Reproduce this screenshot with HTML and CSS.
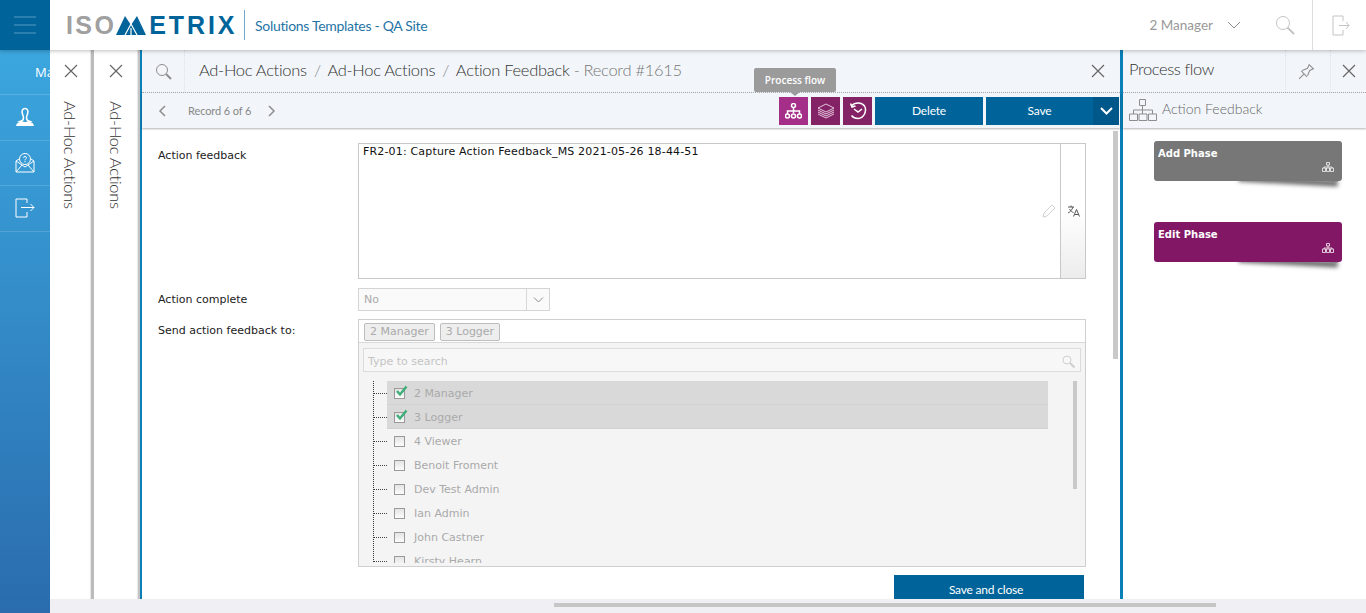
FILE: index.html
```html
<!DOCTYPE html>
<html lang="en">
<head>
    <meta charset="UTF-8">
    <meta name="viewport" content="width=device-width, initial-scale=1.0">
    <title>Action Feedback - Record #1615</title>
    <link rel="stylesheet" href="styles.css">
</head>
<body>
    <!-- Top Bar -->
    <header class="topbar">
        <div class="menu-btn">
            <span></span><span></span><span></span>
        </div>
        <div class="logo">
            <span class="logo-iso">ISO</span>
            <svg class="logo-m" width="30" height="19" viewBox="0 0 30 19">
                <path d="M0 19 L9 0 L15 9 L21 0 L30 19 Z" fill="#00649a"/>
                <path d="M9 19 L15 8 L21 19 M15 12 V19" fill="none" stroke="#fff" stroke-width="1.200"/>
            </svg>
            <span class="logo-etrix">ETRIX</span>
        </div>
        <div class="site-name">Solutions Templates - QA Site</div>
        <div class="user-box">
            <span class="user-name">2 Manager</span>
            <svg width="14" height="8" viewBox="0 0 14 8"><path d="M1 1 L7 7 L13 1" class="line-gray"/></svg>
            <svg class="top-search" width="20" height="20" viewBox="0 0 20 20"><circle cx="8" cy="8" r="6.500" class="line-light"/><path d="M12.500 12.500 L19 19" class="line-light thick"/></svg>
            <div class="top-logout">
                <svg width="18" height="21" viewBox="0 0 18 21"><path d="M11 6 V1 H1 V20 H11 V15 M7 10.500 H17 M14 7 L17 10.500 L14 14" class="line-light"/></svg>
            </div>
        </div>
    </header>

    <div class="workspace">
        <!-- Side Nav -->
        <nav class="sidenav">
            <div class="nav-item nav-first">Ma</div>
            <div class="nav-item">
                <svg width="20" height="20" viewBox="0 0 20 20"><path d="M10 1.500 C7.500 1.500 6.800 3.500 7.200 6 C7.600 8 8.500 9 8.500 11 C8.500 13 7 14 5 14.500 L10 16 L15 14.500 C13 14 11.500 13 11.500 11 C11.500 9 12.400 8 12.800 6 C13.200 3.500 12.500 1.500 10 1.500 Z" class="line-white wide"/><path d="M1 19 C1.500 16.500 3 15.300 6 14.500 L10 16 L14 14.500 C17 15.300 18.500 16.500 19 19 Z" fill="#fff"/></svg>
            </div>
            <div class="nav-item">
                <svg width="20" height="20" viewBox="0 0 20 20"><path d="M1 8 L4 6 M16 6 L19 8 V19 H1 V8 L10 14 L19 8 M1 19 L7 12 M19 19 L13 12" class="line-white"/><circle cx="10" cy="6" r="5.500" class="line-white"/><path d="M8.500 4.800 C8.500 3 11.500 3 11.500 4.800 C11.500 6 10 6 10 7.300 M10 8 V9.200" class="line-white"/></svg>
            </div>
            <div class="nav-item">
                <svg width="20" height="20" viewBox="0 0 20 20"><path d="M12 5 V1 H1 V19 H12 V14 M6 9.500 H19 M15.500 6 L19 9.500 L15.500 13" class="line-white"/></svg>
            </div>
        </nav>

        <div class="content-col">
            <div class="panels">
                <!-- Collapsed Panels -->
                <div class="collapsed-panel">
                    <svg class="close-icon" width="14" height="14" viewBox="0 0 14 14"><path d="M1 1 L13 13 M13 1 L1 13"/></svg>
                    <div class="collapsed-title">Ad-Hoc Actions</div>
                </div>
                <div class="collapsed-panel panel-two">
                    <svg class="close-icon" width="14" height="14" viewBox="0 0 14 14"><path d="M1 1 L13 13 M13 1 L1 13"/></svg>
                    <div class="collapsed-title">Ad-Hoc Actions</div>
                </div>

                <!-- Record Panel -->
                <main class="record-panel">
                    <div class="panel-title-row">
                        <div class="title-search">
                            <svg width="17" height="17" viewBox="0 0 17 17"><circle cx="7" cy="7" r="5.500" class="line-gray"/><path d="M11 11 L16 16" class="line-gray thick"/></svg>
                        </div>
                        <div class="crumbs">Ad-Hoc Actions <i>/</i> Ad-Hoc Actions <i>/</i> Action Feedback <span class="crumb-record">- Record #1615</span></div>
                        <svg class="close-icon title-close" width="14" height="14" viewBox="0 0 14 14"><path d="M1 1 L13 13 M13 1 L1 13"/></svg>
                    </div>

                    <div class="toolbar">
                        <svg width="8" height="12" viewBox="0 0 8 12"><path d="M7 1 L2 6 L7 11" class="line-gray wide"/></svg>
                        <span class="record-count">Record 6 of 6</span>
                        <svg width="8" height="12" viewBox="0 0 8 12"><path d="M1 1 L6 6 L1 11" class="line-gray wide"/></svg>

                        <div class="toolbar-actions">
                            <div class="tooltip">Process flow</div>
                            <button class="icon-btn active">
                                <svg width="17" height="16" viewBox="0 0 17 16"><circle cx="8.500" cy="2.500" r="2" class="line-white wide"/><path d="M8.500 4.500 V10 M2.500 11 V8 H14.500 V11" class="line-white wide"/><circle cx="2.500" cy="13" r="2" class="line-white wide"/><circle cx="8.500" cy="13" r="2" class="line-white wide"/><circle cx="14.500" cy="13" r="2" class="line-white wide"/></svg>
                            </button>
                            <button class="icon-btn">
                                <svg width="18" height="16" viewBox="0 0 18 16"><path d="M9 1 L17 5 L9 9 L1 5 Z M1 7 L9 11 L17 7 M1 9 L9 13 L17 9 M1 11 L9 15 L17 11" class="line-pink"/></svg>
                            </button>
                            <button class="icon-btn">
                                <svg width="18" height="18" viewBox="0 0 18 18"><path d="M3 3.500 C6 0 13 0 15.500 4 C18 8.500 15.500 16 9 16.500 C6 16.500 4 15.500 2.500 13.500 M1.500 1.500 L3 5 L6.500 4 M5 7 L9 10 L13 7" class="line-white wide"/></svg>
                            </button>
                            <button class="text-btn delete-btn">Delete</button>
                            <div class="save-btn">
                                <button class="text-btn">Save</button>
                                <div class="save-arrow">
                                    <svg width="13" height="8" viewBox="0 0 13 8"><path d="M1 1 L6.500 6.500 L12 1" class="line-white thick"/></svg>
                                </div>
                            </div>
                        </div>
                    </div>

                    <div class="form-area">
                        <div class="form-scroll"></div>
                        <div class="form-row">
                            <label class="form-label first-label">Action feedback</label>
                            <div class="feedback-box">
                                <div class="feedback-text">
                                    FR2-01: Capture Action Feedback_MS 2021-05-26 18-44-51
                                    <svg class="pencil" width="14" height="14" viewBox="0 0 14 14"><path d="M1 13 L2 9 L10 1 L13 4 L5 12 Z" class="line-pale"/></svg>
                                </div>
                                <div class="translate-col">
                                    <svg width="13" height="12" viewBox="0 0 13 12"><path d="M1 2 H7 M4 0.500 V2 M6 2 C5 5 3 7 1 8 M2.500 4 C3.500 6 5 7 6.500 7.500" class="line-dark"/><path d="M6.500 11.500 L9.500 4.500 L12.500 11.500 M7.500 9.500 H11.500" class="line-dark"/></svg>
                                </div>
                            </div>
                        </div>

                        <div class="form-row row-tight">
                            <label class="form-label">Action complete</label>
                            <div class="select-box">
                                <span class="select-value">No</span>
                                <div class="select-arrow">
                                    <svg width="11" height="6" viewBox="0 0 11 6"><path d="M1 0.500 L5.500 5 L10 0.500" class="line-gray"/></svg>
                                </div>
                            </div>
                        </div>

                        <div class="form-row row-tight">
                            <label class="form-label">Send action feedback to:</label>
                            <div class="picker">
                                <div class="chips">
                                    <span class="chip">2 Manager</span>
                                    <span class="chip">3 Logger</span>
                                </div>
                                <div class="picker-body">
                                    <div class="picker-search">
                                        <span>Type to search</span>
                                        <svg width="13" height="13" viewBox="0 0 13 13"><circle cx="5" cy="5" r="4" class="line-pale"/><path d="M8 8 L12.500 12.500" class="line-pale thick"/></svg>
                                    </div>
                                    <div class="tree">
                                        <div class="tree-thumb"></div>
                                        <div class="tree-row selected"><span class="check on"><svg width="14" height="13" viewBox="0 0 14 13"><path d="M3 6 L6 9.500 L12.500 1.500" class="tick"/></svg></span>2 Manager</div>
                                        <div class="tree-row selected"><span class="check on"><svg width="14" height="13" viewBox="0 0 14 13"><path d="M3 6 L6 9.500 L12.500 1.500" class="tick"/></svg></span>3 Logger</div>
                                        <div class="tree-row"><span class="check"></span>4 Viewer</div>
                                        <div class="tree-row"><span class="check"></span>Benoit Froment</div>
                                        <div class="tree-row"><span class="check"></span>Dev Test Admin</div>
                                        <div class="tree-row"><span class="check"></span>Ian Admin</div>
                                        <div class="tree-row"><span class="check"></span>John Castner</div>
                                        <div class="tree-row"><span class="check"></span>Kirsty Hearn</div>
                                    </div>
                                </div>
                            </div>
                        </div>

                        <div class="form-footer">
                            <button class="text-btn close-btn">Save and close</button>
                        </div>
                    </div>
                </main>

                <!-- Process Flow Panel -->
                <aside class="flow-panel">
                    <div class="flow-title-row">
                        <div class="flow-title">Process flow</div>
                        <div class="flow-pin">
                            <svg width="17" height="17" viewBox="0 0 16 16"><path d="M1 15 L5.500 10.500 M3 7.500 L8.500 13 M4 7 L9 5 L10.500 1.500 L14.500 5.500 L11 7 L9 12" class="line-gray"/></svg>
                        </div>
                        <div class="flow-close">
                            <svg class="close-icon" width="14" height="14" viewBox="0 0 14 14"><path d="M1 1 L13 13 M13 1 L1 13"/></svg>
                        </div>
                    </div>
                    <div class="flow-sub">
                        <svg width="28" height="22" viewBox="0 0 28 22"><path d="M10.500 0.500 H16.500 V6.500 H10.500 Z M13.500 6.500 V11 M4.500 15 V11 H23.500 V15 M13.500 11 V15 M0.500 15 H8.500 V21.500 H0.500 Z M10 15 H18 V21.500 H10 Z M19.500 15 H27.500 V21.500 H19.500 Z" class="line-gray"/></svg>
                        <span>Action Feedback</span>
                    </div>
                    <div class="phase-list">
                        <div class="phase phase-add">
                            Add Phase
                            <svg class="phase-icon" width="12" height="10" viewBox="0 0 12 10"><path d="M4.500 0.500 H7.500 V3 H4.500 Z M6 3 V5 M0.500 6 H3.500 V9.500 H0.500 Z M4.500 6 H7.500 V9.500 H4.500 Z M8.500 6 H11.500 V9.500 H8.500 Z M2 6 V5 H10 V6" class="line-phase"/></svg>
                        </div>
                        <div class="phase phase-edit">
                            Edit Phase
                            <svg class="phase-icon" width="12" height="10" viewBox="0 0 12 10"><path d="M4.500 0.500 H7.500 V3 H4.500 Z M6 3 V5 M0.500 6 H3.500 V9.500 H0.500 Z M4.500 6 H7.500 V9.500 H4.500 Z M8.500 6 H11.500 V9.500 H8.500 Z M2 6 V5 H10 V6" class="line-phase"/></svg>
                        </div>
                    </div>
                </aside>
            </div>

            <div class="page-scroll"><div class="page-thumb"></div></div>
        </div>
    </div>
</body>
</html>
```

FILE: styles.css
```css
/* General Styles */
* {
    box-sizing: border-box;
}

html, body {
    height: 100%;
}

body {
    display: flex;
    flex-direction: column;
    margin: 0;
    overflow: hidden;
    font-family: "DejaVu Sans", Verdana, sans-serif;
    font-size: 11px;
    color: #222;
    background-color: #fff;
}

button {
    border: none;
    padding: 0;
    font: inherit;
    cursor: pointer;
}

svg {
    display: block;
    flex: none;
}

/* SVG line colours */
.line-white, .line-gray, .line-light, .line-pale, .line-dark, .line-phase, .line-pink {
    fill: none;
    stroke-width: 1;
}

.line-white { stroke: #fff; }
.line-pink { stroke: #e6c6dd; }
.line-gray { stroke: #8d8d8d; }
.line-light { stroke: #c4c4c4; }
.line-pale { stroke: #d0d0d0; }
.line-dark { stroke: #555; }
.line-phase { stroke: rgba(255, 255, 255, 0.75); }
.wide { stroke-width: 1.500; }
.thick { stroke-width: 2; }

.close-icon path {
    fill: none;
    stroke: #666;
    stroke-width: 1.200;
}

/* Top Bar */
.topbar {
    position: relative;
    z-index: 5;
    display: flex;
    align-items: center;
    flex: none;
    height: 50px;
    background: #fff;
    box-shadow: 0 1px 4px rgba(0, 0, 0, 0.25);
}

.menu-btn {
    display: flex;
    flex-direction: column;
    justify-content: center;
    gap: 6px;
    width: 50px;
    height: 50px;
    padding: 0 14px;
    background: #00649a;
}

.menu-btn span {
    height: 2px;
    background: #2a7fae;
}

.logo {
    display: flex;
    align-items: center;
    width: 179px;
    height: 30px;
    margin-left: 16px;
    font-family: "Liberation Sans", Arial, sans-serif;
    font-size: 25px;
    font-weight: bold;
    border-right: 1px solid #6fa9c8;
}

.logo-iso {
    color: #a0a0a0;
    letter-spacing: 2.400px;
}

.logo-m {
    margin: 0 3px 0 0;
}

.logo-etrix {
    color: #00649a;
    letter-spacing: 2.900px;
}

.site-name {
    margin-left: 10px;
    font-family: Lato, sans-serif;
    font-size: 14px;
    letter-spacing: -0.300px;
    color: #1f74a5;
}

.user-box {
    display: flex;
    align-items: center;
    height: 50px;
    margin-left: auto;
}

.user-name {
    margin-right: 14px;
    font-family: Lato, sans-serif;
    font-size: 13.500px;
    color: #999;
}

.top-search {
    margin-left: 34px;
}

.top-logout {
    display: flex;
    align-items: center;
    height: 50px;
    margin-left: 17px;
    padding: 0 16px 0 19px;
    border-left: 1px solid #ddd;
}

/* Layout */
.workspace {
    display: flex;
    flex: 1;
    min-height: 0;
}

.sidenav {
    flex: none;
    width: 50px;
    overflow: hidden;
    background: linear-gradient(#3ba6de, #2a6cae);
}

.nav-item {
    display: flex;
    align-items: center;
    justify-content: center;
    height: 45.500px;
    border-bottom: 1px solid rgba(255, 255, 255, 0.15);
}

.nav-first {
    justify-content: flex-start;
    height: 45px;
    padding-left: 35px;
    font-family: "Open Sans", sans-serif;
    font-size: 13px;
    color: #fff;
    white-space: nowrap;
}

.content-col {
    display: flex;
    flex-direction: column;
    flex: 1;
    min-width: 0;
}

.panels {
    display: flex;
    flex: 1;
    min-height: 0;
}

.page-scroll {
    flex: none;
    height: 14px;
    padding: 4px 0 0 504px;
    background: #f0eff4;
}

.page-thumb {
    width: 662px;
    height: 4px;
    background: #c6c6c6;
}

/* Collapsed Panels */
.collapsed-panel {
    display: flex;
    flex-direction: column;
    align-items: center;
    flex: none;
    width: 44px;
    padding-top: 14px;
    background: #fff;
    border-right: 3px solid #bbb;
    box-shadow: inset -1px 0 1px rgba(0, 0, 0, 0.1);
}

.panel-two {
    width: 46px;
    border-right: 2px solid #c4c4c4;
}

.collapsed-title {
    margin-top: 23px;
    margin-left: -2px;
    writing-mode: vertical-rl;
    font-family: Lato, sans-serif;
    font-size: 16.500px;
    font-weight: 300;
    letter-spacing: -0.300px;
    color: #333;
    white-space: nowrap;
}

.panel-two .collapsed-title {
    margin-left: -1px;
}

/* Record Panel */
.record-panel {
    display: flex;
    flex-direction: column;
    flex: none;
    width: 983px;
    min-height: 0;
    border-left: 2px solid #0a7fb8;
    border-right: 3px solid #0a7fb8;
    background: #fff;
}

.panel-title-row {
    display: flex;
    align-items: center;
    flex: none;
    height: 43px;
    background: #f2f6fa;
    border-bottom: 1px dotted #aaa;
}

.title-search {
    display: flex;
    align-items: center;
    justify-content: center;
    width: 43px;
    height: 42px;
    border-right: 1px dotted #dde3ea;
}

.crumbs {
    margin-left: 14px;
    margin-top: -3px;
    font-family: Lato, sans-serif;
    font-size: 16.500px;
    font-weight: 300;
    letter-spacing: -0.300px;
    color: #333;
    white-space: nowrap;
}

.crumbs i {
    margin: 0 3px;
    font-style: normal;
    color: #888;
}

.crumb-record {
    color: #777;
}

.title-close {
    margin-left: auto;
    margin-right: 15px;
}

.toolbar {
    display: flex;
    align-items: center;
    flex: none;
    height: 35px;
    padding-left: 16px;
    background: #f2f6fa;
    box-shadow: 0 1px 2px rgba(0, 0, 0, 0.3);
    z-index: 2;
}

.record-count {
    width: 80px;
    margin-left: 22px;
    font-family: Lato, sans-serif;
    font-size: 11px;
    letter-spacing: -0.100px;
    color: #888;
}

.toolbar-actions {
    position: relative;
    display: flex;
    gap: 3px;
    margin-left: auto;
    margin-right: 1px;
}

.tooltip {
    position: absolute;
    top: -29px;
    left: -25px;
    width: 82px;
    height: 24px;
    border-radius: 2px;
    background: #9b9b9b;
    font-family: "Open Sans", sans-serif;
    font-size: 10px;
    font-weight: 600;
    line-height: 24px;
    text-align: center;
    color: #fff;
}

.tooltip::after {
    content: "";
    position: absolute;
    left: 36px;
    bottom: -4px;
    border-left: 5px solid transparent;
    border-right: 5px solid transparent;
    border-top: 4px solid #9b9b9b;
}

.icon-btn {
    display: flex;
    align-items: center;
    justify-content: center;
    width: 29px;
    height: 28px;
    background: #842266;
}

.icon-btn.active {
    background: #a52e89;
}

.text-btn {
    font-family: Lato, sans-serif;
    font-size: 12px;
    letter-spacing: -0.200px;
    color: #fff;
    background: #00649a;
}

.delete-btn {
    width: 108px;
    height: 28px;
}

.save-btn {
    display: flex;
    width: 133px;
    height: 28px;
}

.save-btn .text-btn {
    width: 107px;
}

.save-arrow {
    display: flex;
    align-items: center;
    justify-content: center;
    width: 26px;
    background: #00578a;
}

/* Form */
.form-area {
    position: relative;
    flex: 1;
    min-height: 0;
    overflow: hidden;
    padding-top: 15px;
    padding-left: 16px;
}

.form-scroll {
    position: absolute;
    top: 3px;
    right: 2px;
    width: 5px;
    height: 228px;
    background: #c9c9c9;
}

.form-row {
    display: flex;
    margin-bottom: 9px;
}

.row-tight {
    margin-bottom: 8px;
}

.form-label {
    flex: none;
    width: 200px;
    padding-top: 5px;
    color: #222;
}

.first-label {
    padding-top: 6px;
}

.feedback-box {
    display: flex;
    width: 728px;
    height: 136px;
    border: 1px solid #c8c8c8;
}

.feedback-text {
    position: relative;
    flex: 1;
    padding: 1px 4px;
    letter-spacing: 0.170px;
    color: #111;
}

.pencil {
    position: absolute;
    right: 4px;
    bottom: 60px;
}

.translate-col {
    display: flex;
    justify-content: center;
    flex: none;
    width: 25px;
    padding-top: 61px;
    border-left: 1px solid #c8c8c8;
    background: linear-gradient(#fff 50%, #ececec);
}

.select-box {
    display: flex;
    align-items: center;
    width: 192px;
    height: 23px;
    border: 1px solid #d4d4d4;
    background: #fafafa;
}

.select-value {
    flex: 1;
    padding-left: 5px;
    color: #aaa;
}

.select-arrow {
    display: flex;
    align-items: center;
    justify-content: center;
    width: 23px;
    height: 21px;
    border-left: 1px solid #d8d8d8;
}

.picker {
    width: 728px;
    height: 248px;
    border: 1px solid #cfcfcf;
    background: #f4f4f4;
}

.chips {
    display: flex;
    gap: 5px;
    height: 23px;
    padding: 3px 0 0 5px;
    background: #fff;
    border-bottom: 1px solid #d8d8d8;
}

.chip {
    height: 18px;
    padding: 0 5px;
    border: 1px solid #bdbdbd;
    border-radius: 2px;
    background: #eee;
    line-height: 16px;
    color: #aaa;
}

.picker-body {
    padding: 5px 4px 0;
}

.picker-search {
    display: flex;
    align-items: center;
    justify-content: space-between;
    height: 24px;
    padding: 2px 5px 0 4px;
    border: 1px solid #dcdcdc;
    background: #f7f7f7;
    color: #c4c4c4;
}

.tree {
    position: relative;
    height: 182px;
    margin-top: 9px;
    overflow: hidden;
    padding-left: 24px;
    padding-right: 33px;
    background-image: linear-gradient(#333 50%, transparent 50%);
    background-size: 1px 2px;
    background-repeat: repeat-y;
    background-position: 10px 0;
}

.tree-thumb {
    position: absolute;
    top: 0;
    right: 4px;
    width: 4px;
    height: 108px;
    background: #c9c9c9;
}

.tree-row {
    position: relative;
    display: flex;
    align-items: center;
    height: 24px;
    padding-left: 7px;
    color: #aaa;
}

.tree-row::before {
    content: "";
    position: absolute;
    left: -13px;
    top: 12px;
    width: 13px;
    border-top: 1px dotted #444;
}

.tree-row.selected {
    background: #d9d9d9;
    box-shadow: inset 0 -1px 0 #d2d2d2;
}

.check {
    position: relative;
    flex: none;
    width: 11px;
    height: 11px;
    margin-right: 9px;
    border: 1px solid #999;
    background: linear-gradient(#e4e4e4, #fbfbfb);
}

.check svg {
    position: absolute;
    top: -4px;
    left: -1px;
}

.tick {
    fill: none;
    stroke: #3fae78;
    stroke-width: 2.400;
}

.form-footer {
    display: flex;
    justify-content: flex-end;
    width: 926px;
}

.close-btn {
    width: 190px;
    height: 30px;
    padding: 0 6px 2px 0;
}

/* Process Flow Panel */
.flow-panel {
    flex: 1;
    min-width: 0;
    background: #fff;
}

.flow-title-row {
    display: flex;
    height: 43px;
    background: #f2f6fa;
    border-bottom: 1px dotted #aaa;
}

.flow-title {
    flex: 1;
    padding-left: 6px;
    font-family: Lato, sans-serif;
    font-size: 16.500px;
    font-weight: 300;
    letter-spacing: -0.400px;
    line-height: 39px;
    color: #333;
}

.flow-pin, .flow-close {
    display: flex;
    align-items: center;
    justify-content: center;
    width: 45px;
    height: 42px;
    padding-right: 4px;
    border-left: 1px dotted #dde3ea;
}

.flow-close {
    width: 36px;
    padding-right: 0;
}

.flow-sub {
    display: flex;
    align-items: center;
    gap: 5px;
    height: 35px;
    padding-left: 6px;
    padding-bottom: 2px;
    background: #f2f6fa;
    box-shadow: 0 1px 2px rgba(0, 0, 0, 0.3);
    font-family: Lato, sans-serif;
    font-size: 14px;
    font-weight: 300;
    color: #666;
}

.flow-sub span {
    margin-bottom: 2px;
}

.phase-list {
    display: flex;
    flex-direction: column;
    gap: 41px;
    padding: 13px 0 0 31px;
    isolation: isolate;
}

.phase {
    position: relative;
    width: 188px;
    height: 40px;
    padding: 7px 4px;
    border-radius: 3px;
    font-size: 10px;
    font-weight: bold;
    color: #fff;
}

.phase::after {
    content: "";
    position: absolute;
    z-index: -1;
    left: 85px;
    right: 4px;
    bottom: 2px;
    height: 6px;
    background: #555;
    box-shadow: 0 5px 4px rgba(0, 0, 0, 0.6);
    transform: rotate(3deg);
}

.phase-add {
    background: #777;
}

.phase-edit {
    background: #821865;
}

.phase-icon {
    position: absolute;
    right: 8px;
    bottom: 9px;
}
```
